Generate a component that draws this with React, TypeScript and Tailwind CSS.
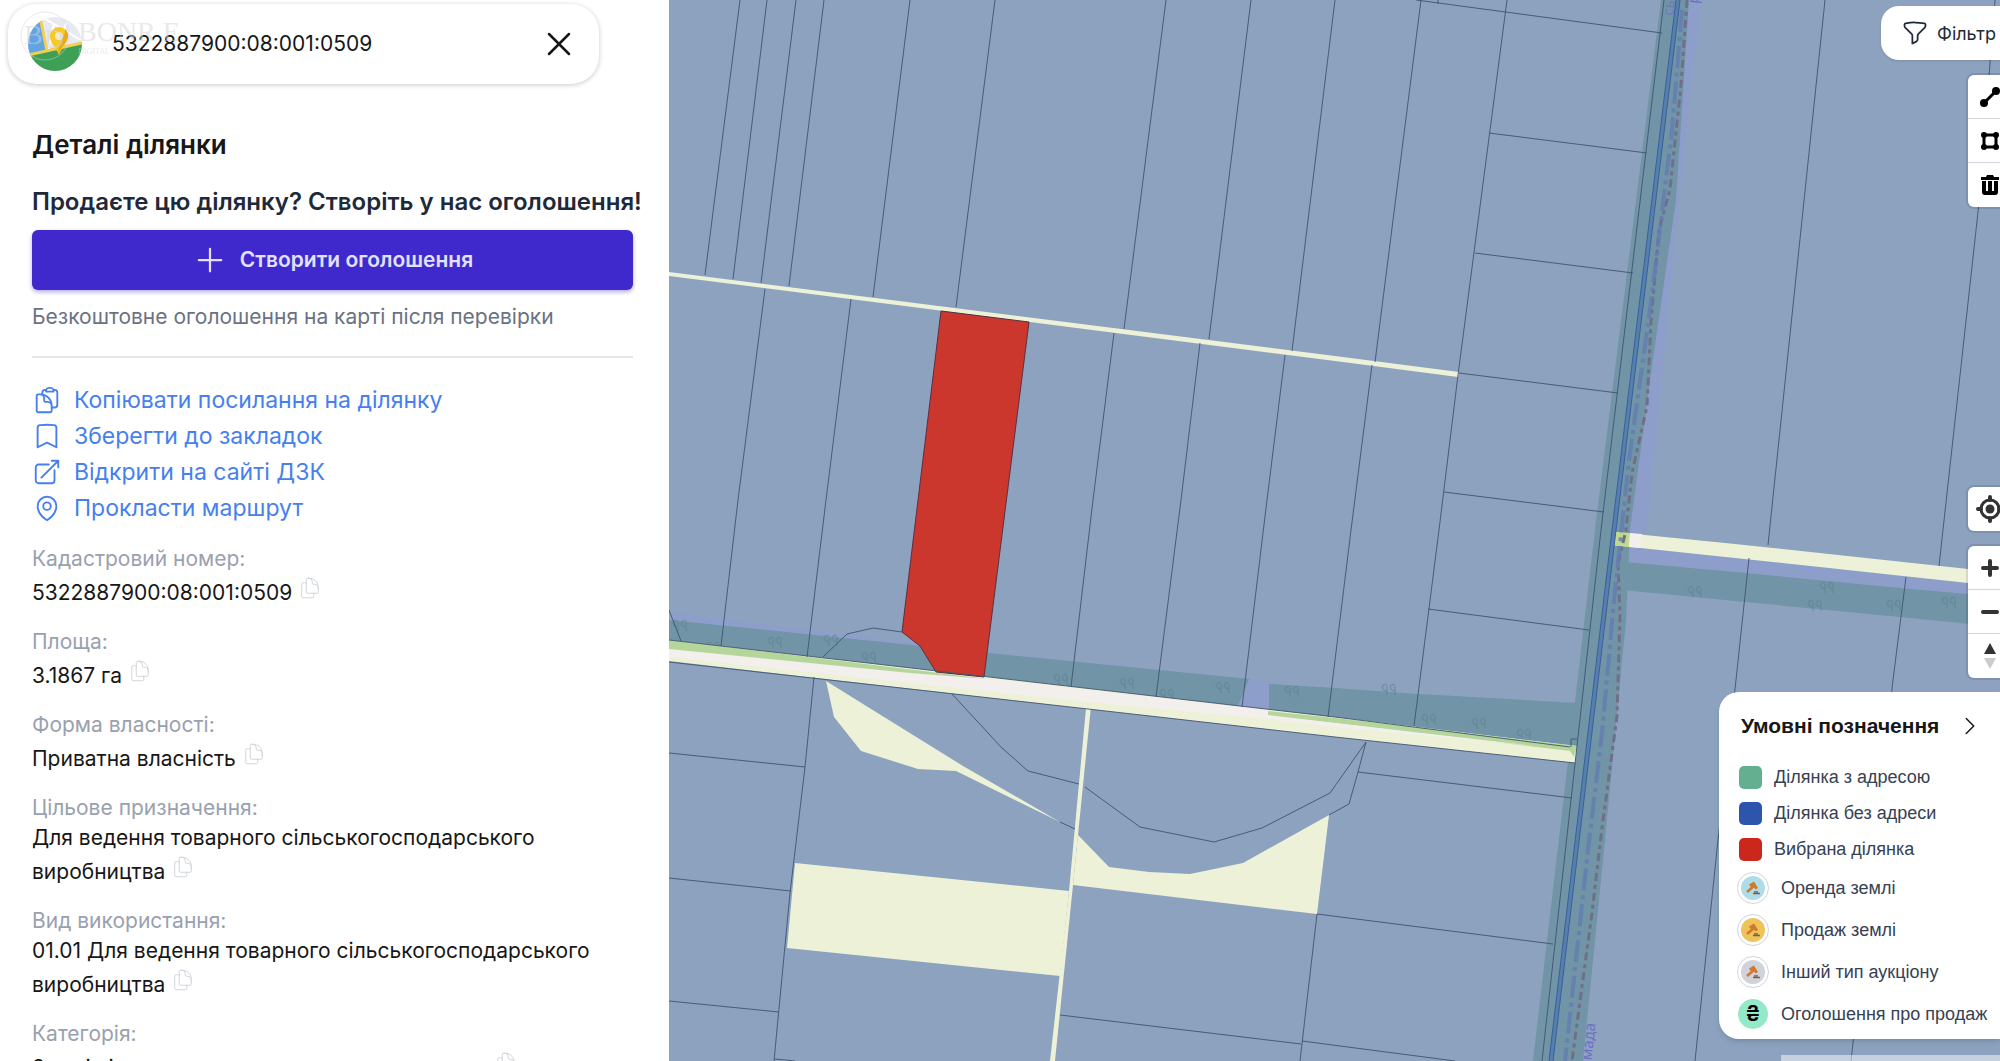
import { useState } from "react";
import type { ReactNode } from "react";
import {
  HiOutlineArrowTopRightOnSquare,
  HiOutlineBookmark,
  HiOutlineChevronRight,
  HiOutlineClipboardDocument,
  HiOutlineDocumentDuplicate,
  HiOutlineFunnel,
  HiOutlineMapPin,
  HiOutlinePlus,
  HiOutlineXMark,
} from "react-icons/hi2";

interface Field {
  label: string;
  value: string;
}

const CADASTRAL_NUMBER = "5322887900:08:001:0509";

const fields: Field[] = [
  { label: "Кадастровий номер:", value: CADASTRAL_NUMBER },
  { label: "Площа:", value: "3.1867 га" },
  { label: "Форма власності:", value: "Приватна власність" },
  { label: "Цільове призначення:", value: "Для ведення товарного сільськогосподарського виробництва" },
  { label: "Вид використання:", value: "01.01 Для ведення товарного сільськогосподарського виробництва" },
  { label: "Категорія:", value: "Землі сільськогосподарського призначення" },
];

const actions = [
  { label: "Копіювати посилання на ділянку", icon: HiOutlineClipboardDocument },
  { label: "Зберегти до закладок", icon: HiOutlineBookmark },
  { label: "Відкрити на сайті ДЗК", icon: HiOutlineArrowTopRightOnSquare },
  { label: "Прокласти маршрут", icon: HiOutlineMapPin },
];

// Parcel borders, in map canvas units
const borders = [
  "M740 0 705 275",
  "M767 0 733 279",
  "M796 0 761 283",
  "M824 0 789 286",
  "M910 0 873 297",
  "M995 0 956 307",
  "M1166 0 1124 329",
  "M1251 0 1209 339",
  "M1335 0 1292 351",
  "M1421 0 1375 362",
  "M1507 0 1458 375 1439 530 1414 726",
  "M765 289 738 500 721 646",
  "M851 299 826 500 807 657",
  "M1114 333 1093 500 1071 687",
  "M1200 343 1181 500 1156 697",
  "M1285 355 1267 500 1242 707",
  "M1372 365 1351 530 1328 717",
  "M1416 0 1662 33",
  "M1438 0V4",
  "M1489 133 1647 153",
  "M1475 253 1633 273",
  "M1459 373 1618 393",
  "M1444 492 1604 512",
  "M1428 609 1589 630",
  "M1664 0 1601 530 1542 1061",
  "M1825 0 1768 545",
  "M1749 558 1736 680 1718 840 1695 1061",
  "M1995 0 1979 203 1939 566",
  "M1906 577 1893 680 1851 1061",
  "M669 640 1335 717 1570 747",
  "M669 662 1088 709 1335 737 1575 763",
  "M669 610 681 641",
  "M814 677 805 767 790 893 774 1061",
  "M669 753 805 767",
  "M669 878 791 891",
  "M669 1001 779 1012",
  "M775 1059 795 1061",
  "M823 657 847 634 873 628 902 632",
  "M952 694 1001 747 1028 771 1079 784",
  "M1085 787 1140 827 1214 842 1262 828 1330 793 1366 742",
  "M1366 742 1358 772 1349 804 1329 815",
  "M1060 822 1075 829",
  "M1358 772 1572 798",
  "M1317 914 1553 944",
  "M1060 1015 1301 1044",
  "M1317 914 1300 1061",
  "M1302 1041 1455 1061",
  "M1571 739H1577M1571 739V747",
];

const trees: [number, number][] = [
  [681, 626], [714, 648], [776, 643], [832, 641], [870, 658], [1062, 680], [1128, 684],
  [1168, 695], [1224, 688], [1293, 692], [1390, 690], [1430, 720], [1480, 724], [1525, 735],
  [1696, 592], [1816, 606], [1828, 588], [1895, 606], [1950, 603],
];

function ParcelMap() {
  return (
    <svg
      className="block h-full w-full"
      viewBox="669 0 1331 1061"
      preserveAspectRatio="xMinYMin slice"
      role="img"
      aria-label="Кадастрова карта"
    >
      <rect x="669" width="1331" height="1061" fill="#8da2bf" />

      {/* woodland strips */}
      <path d="M669 612 988 652 1249 679 1269 682V710L1238 706 669 630Z" fill="#8d9eca" />
      <path d="M669 620 988 653 1249 679 1238 706 669 640Z" fill="#7194a6" />
      <path d="M1269 684 1335 688 1418 694 1577 703 1571 747 1269 711Z" fill="#7194a6" />
      <path d="M1630 546 1735 558 1900 576 2000 587V597L1735 572 1628 562Z" fill="#8d9eca" />
      <path d="M1625 562 1735 572 1900 588 2000 597V627L1900 617 1735 601 1622 590Z" fill="#7194a6" />
      <path d="M1689 0H1701L1675 240 1647 530 1629 540Z" fill="#8d9eca" />
      <path d="M1661 0H1689L1676 200 1650 380 1630 530 1626 620 1605 840 1583 1061H1533L1595 530Z" fill="#7194a6" />

      {/* tree marks */}
      <g fill="none" stroke="#5f8794" strokeWidth="1.5" opacity=".6">
        {trees.map(([x, y]) => (
          <path
            key={`${x}-${y}`}
            d={`M${x - 3} ${y - 5}a3 3 0 1 0 .1 5M${x - 3} ${y - 4}v9M${x + 5} ${y - 5}a3 3 0 1 0 .1 5M${x + 5} ${y - 4}v9`}
          />
        ))}
      </g>

      {/* field roads and unregistered land */}
      <path d="M669 272 1335 356 1459 372 1458 377 1335 361 669 276Z" fill="#edf1d8" />
      <path d="M669 640 1335 717 1577 746 1575 763 1335 737 1088 709 669 661Z" fill="#edf1d8" />
      <path d="M669 640 988 679 900 674 669 650ZM1268 711 1335 718 1577 746 1574 757 1570 751 1335 723 1268 716Z" fill="#b5d69b" />
      <path d="M669 649 910 673 1000 680 1268 710V719L1088 702 669 657Z" fill="#f2efec" />
      <path d="M1268 715 1335 723 1535 746 1335 727 1268 719Z" fill="#f2efec" />
      <path d="M1086 708 1091 706 1078 835 1073 885 1055 1061H1050L1069 891Z" fill="#edf1d8" />
      <path d="M826 681 963 766 1060 822 956 771 918 769 861 751 834 717Z" fill="#edf1d8" />
      <path d="M795 863 1069 891 1060 976 787 948Z" fill="#edf1d8" />
      <path d="M1078 835 1109 867 1149 872 1190 874 1243 863 1329 815 1317 914 1073 885Z" fill="#edf1d8" />
      <path d="M1615 532 1735 544 1968 569 2000 573V587L1968 583 1735 558 1612 545Z" fill="#edf1d8" />
      <path d="M1615 532 1630 533 1629 547 1612 545Z" fill="#c3da8c" />
      <path d="M1630 533 1642 534 1640 548 1629 547Z" fill="#f2efec" />

      {/* selected parcel */}
      <path
        d="M941 311 1029 322 984 677 936 672 920 646 902 632Z"
        fill="#cb372d"
        stroke="#5b3040"
        strokeWidth="1"
      />

      <g fill="none" stroke="#41536f" strokeWidth=".9">
        {borders.map((d) => (
          <path key={d} d={d} />
        ))}
      </g>

      {/* stream and administrative boundary */}
      <g fill="none">
        <path d="M1678 0 1614 530 1551 1061" stroke="#5580ad" strokeWidth="4" />
        <path d="M1680 0 1616 530 1553 1061" stroke="#3c5f9c" strokeWidth="1" />
        <path d="M1676 0 1612 530 1549 1061" stroke="#3c5f9c" strokeWidth="1" />
        <path
          d="M1687 0 1681 85 1670 189 1659 230 1651 321 1647 406 1632 473 1626 530 1618 564 1620 615 1617 716 1602 828 1592 913 1580 1001 1572 1061"
          stroke="#716f88"
          strokeWidth="3"
          strokeDasharray="8 4 4 4"
        />
        <path
          d="M1682 10 1672 130 1650 310 1629 460 1614 600 1602 733 1588 850 1565 1061"
          stroke="#627cb3"
          strokeWidth="4"
          strokeDasharray="22 5 4 5"
          opacity=".8"
        />
      </g>
      <g fill="#6d6fc4" fontSize="15" fontFamily="'Noto Sans', sans-serif">
        <text transform="translate(1589 1085) rotate(-84)">громада</text>
        <text transform="translate(1673 16) rotate(-84)" opacity=".7">ська</text>
        <text transform="translate(1698 4) rotate(-84)">рада</text>
      </g>
    </svg>
  );
}

function Logo() {
  return (
    <svg viewBox="0 0 54 54" className="size-[54px] shrink-0" aria-hidden="true">
      <defs>
        <clipPath id="logo-clip">
          <circle cx="27" cy="27" r="27" />
        </clipPath>
      </defs>
      <g clipPath="url(#logo-clip)">
        <rect width="54" height="54" fill="#e9eaf1" />
        <path d="M14 0 54 24M26 6 20 34M38 6 32 26" stroke="#fff" strokeWidth="2" />
        <path d="M0 0H12L18 35 0 39Z" fill="#62a4e2" />
        <path d="M0 37 54 25V54H0Z" fill="#3da056" />
        <path d="M12 0 19 34M0 38 54 26" stroke="#f2cf4e" strokeWidth="3" />
        <path d="M31 38C28 30 22 26 22 19a9 9 0 0 1 18 0c0 7-6 11-9 19Z" fill="#f9c91f" />
        <path d="M31 38c0-8 9-12 9-19a9 9 0 0 0-3-7C38 22 28 24 31 38Z" fill="#e5a91a" />
        <circle cx="31" cy="19" r="4" fill="#f3ead2" />
      </g>
    </svg>
  );
}

function Watermark() {
  return (
    <div className="pointer-events-none absolute left-3 top-1 flex items-center text-gray-300 opacity-50" aria-hidden="true">
      <svg viewBox="0 0 50 56" className="h-14 w-[50px]" fill="none" stroke="currentColor">
        <circle cx="25" cy="28" r="24" />
        <text x="4" y="36" fontSize="28" fontFamily="'Liberation Serif', serif" fill="currentColor" stroke="none">B</text>
        <text x="24" y="40" fontSize="28" fontFamily="'Liberation Serif', serif" fill="currentColor" stroke="none">D</text>
      </svg>
      <div className="ml-2 flex flex-col font-['Liberation_Serif',serif]">
        <span className="text-[28px] leading-8">BONR E</span>
        <span className="text-[8px] leading-2">DIGITAL</span>
      </div>
    </div>
  );
}

function SearchCard() {
  const [query, setQuery] = useState(CADASTRAL_NUMBER);

  return (
    <div className="relative ml-2 mr-[70px] mt-1 flex h-20 items-center rounded-[28px] bg-white pl-5 pr-5 shadow-[0_1px_5px_rgba(0,0,0,0.22)]">
      <Logo />
      <input
        className="ml-[30px] min-w-0 flex-1 bg-transparent text-[21px] text-neutral-900 outline-none"
        aria-label="Пошук ділянки"
        value={query}
        onChange={(e) => setQuery(e.target.value)}
      />
      <button type="button" aria-label="Закрити" onClick={() => setQuery("")}>
        <HiOutlineXMark className="size-10 text-neutral-900" />
      </button>
      <Watermark />
    </div>
  );
}

function Sidebar() {
  return (
    <aside className="w-[669px] shrink-0 overflow-hidden bg-white">
      <SearchCard />
      <div className="pl-8 pr-9 pt-11">
        <h1 className="text-[26px] font-semibold leading-[34px] text-neutral-900">Деталі ділянки</h1>
        <h2 className="mt-6 whitespace-nowrap text-[24px] font-semibold leading-8 text-gray-800">
          Продаєте цю ділянку? Створіть у нас оголошення!
        </h2>
        <button
          type="button"
          className="mt-3 flex h-[60px] w-full items-center justify-center gap-3 rounded-md bg-[#3f29cc] text-[21px] font-semibold text-[#e0e2ff] shadow-[0_2px_4px_rgba(63,41,204,0.4)]"
        >
          <HiOutlinePlus className="size-9" />
          Створити оголошення
        </button>
        <p className="mt-3 text-[21px] leading-[30px] text-gray-500">Безкоштовне оголошення на карті після перевірки</p>
        <hr className="mt-6 border-t-2 border-gray-200" />
        <ul className="mt-6">
          {actions.map(({ label, icon: Icon }) => (
            <li key={label} className="h-9">
              <a href="#" className="inline-flex h-9 items-center gap-3 text-[23px] text-[#4680ef]">
                <Icon className="size-[30px]" />
                {label}
              </a>
            </li>
          ))}
        </ul>
        <dl className="mt-[18px] flex flex-col gap-[19px] text-[21px] leading-[30px]">
          {fields.map((field) => (
            <div key={field.label}>
              <dt className="text-gray-400">{field.label}</dt>
              <dd className="text-neutral-900">
                {field.value}{" "}
                <button type="button" aria-label={`Скопіювати: ${field.label}`} className="mt-0.5 inline-block align-baseline">
                  <HiOutlineDocumentDuplicate className="size-6 text-gray-300" strokeWidth={1} />
                </button>
              </dd>
            </div>
          ))}
        </dl>
      </div>
    </aside>
  );
}

function ToolButton({ label, children }: { label: string; children: ReactNode }) {
  return (
    <button type="button" aria-label={label} className="flex size-11 items-center justify-center">
      <svg viewBox="0 0 20 20" className="size-5 overflow-visible" aria-hidden="true">
        {children}
      </svg>
    </button>
  );
}

function MapControls() {
  const group = "absolute -right-3 flex flex-col divide-y divide-gray-300 rounded-md bg-white text-black shadow-[0_0_0_2px_rgba(0,0,0,0.1)]";

  return (
    <>
      <button
        type="button"
        className="absolute right-0 top-1.5 flex h-[54px] items-center gap-2 rounded-l-[18px] bg-white pl-5 pr-1 text-[18px] text-gray-800 shadow-sm"
      >
        <HiOutlineFunnel className="size-7" />
        Фільтр
      </button>
      <div className={`${group} top-[75px]`}>
        <ToolButton label="Виміряти відстань">
          <path d="M4 16 16 4" stroke="currentColor" strokeWidth="3" />
          <circle cx="4" cy="16" r="4" />
          <circle cx="16" cy="4" r="4" />
        </ToolButton>
        <ToolButton label="Виміряти площу">
          <path d="M4 4H16V16H4Z" fill="none" stroke="currentColor" strokeWidth="3" />
          <circle cx="4" cy="4" r="3" />
          <circle cx="16" cy="4" r="3" />
          <circle cx="4" cy="16" r="3" />
          <circle cx="16" cy="16" r="3" />
        </ToolButton>
        <ToolButton label="Видалити">
          <path d="M7 0h6l1 2h5v3H1V2h5zM2 6h4v10h2V6h4v10h2V6h4v11a3 3 0 0 1-3 3H5a3 3 0 0 1-3-3z" />
        </ToolButton>
      </div>
      <div className={`${group} top-[487px]`}>
        <ToolButton label="Моє місцезнаходження">
          <circle cx="10" cy="10" r="9" fill="none" stroke="#333" strokeWidth="3" />
          <circle cx="10" cy="10" r="4.5" fill="#333" />
          <path d="M10-2V1M10 19v3M-2 10H1M19 10h3" stroke="#333" strokeWidth="4" strokeLinecap="round" />
        </ToolButton>
      </div>
      <div className={`${group} top-[546px]`}>
        <ToolButton label="Наблизити">
          <path d="M10 3V17M3 10H17" stroke="#333" strokeWidth="4" strokeLinecap="round" />
        </ToolButton>
        <ToolButton label="Віддалити">
          <path d="M3 10H17" stroke="#333" strokeWidth="4" strokeLinecap="round" />
        </ToolButton>
        <ToolButton label="На північ">
          <path d="M10-3 16 8H4Z" fill="#333" />
          <path d="M10 23 16 12H4Z" fill="#ccc" />
        </ToolButton>
      </div>
    </>
  );
}

function Swatch({ className }: { className: string }) {
  return <span className={`size-[23px] shrink-0 rounded-[5px] ${className}`} />;
}

function Gavel({ className }: { className: string }) {
  return (
    <span className="flex size-8 shrink-0 items-center justify-center rounded-full border border-gray-300 bg-white">
      <span className={`flex size-6 items-center justify-center rounded-full ${className}`}>
        <svg viewBox="0 0 16 16" className="size-4" aria-hidden="true">
          <path d="M2 12 9 6" stroke="#cf7a2c" strokeWidth="2.6" />
          <path d="M4 4.500 9 1.500 13 8 10.500 9.500 8.500 6.500 5.500 7Z" fill="#cf7a2c" />
          <path d="M8 13.500h7M9 11.800h4" stroke="#7a5f4c" strokeWidth="1.300" />
        </svg>
      </span>
    </span>
  );
}

function Legend() {
  return (
    <section className="absolute right-0 top-[692px] w-[281px] rounded-l-[20px] bg-white pb-1 pl-[18px] pt-[18px] font-['Liberation_Sans',sans-serif] text-[18px] text-gray-700 shadow-md">
      <button type="button" className="flex h-8 w-full items-center justify-between pl-1 pr-[18px] text-[21px] font-bold text-neutral-900">
        Умовні позначення
        <HiOutlineChevronRight className="size-6" />
      </button>
      <ul className="mt-[17px]">
        <li className="flex h-9 items-center gap-3 pl-0.5"><Swatch className="bg-[#63af90]" />Ділянка з адресою</li>
        <li className="flex h-9 items-center gap-3 pl-0.5"><Swatch className="bg-[#2d55ab]" />Ділянка без адреси</li>
        <li className="flex h-9 items-center gap-3 pl-0.5"><Swatch className="bg-[#cb271c]" />Вибрана ділянка</li>
        <li className="flex h-[42px] items-center gap-3"><Gavel className="bg-[#aedde8]" />Оренда землі</li>
        <li className="flex h-[42px] items-center gap-3"><Gavel className="bg-[#eec45a]" />Продаж землі</li>
        <li className="flex h-[42px] items-center gap-3"><Gavel className="bg-[#d0d3dc]" />Інший тип аукціону</li>
        <li className="flex h-[42px] items-center gap-3 whitespace-nowrap">
          <span className="mx-px flex size-[30px] shrink-0 items-center justify-center rounded-full bg-[#94e9c8] font-[Inter,sans-serif] text-[21px] font-semibold text-black">₴</span>
          Оголошення про продаж
        </li>
      </ul>
    </section>
  );
}

export default function App() {
  return (
    <div className="flex h-screen overflow-hidden font-[Inter,sans-serif]">
      <Sidebar />
      <main className="relative min-w-0 flex-1 overflow-hidden">
        <ParcelMap />
        <MapControls />
        <Legend />
        <div className="absolute bottom-0 right-0 h-1.5 w-[219px] bg-white/50" />
      </main>
    </div>
  );
}
